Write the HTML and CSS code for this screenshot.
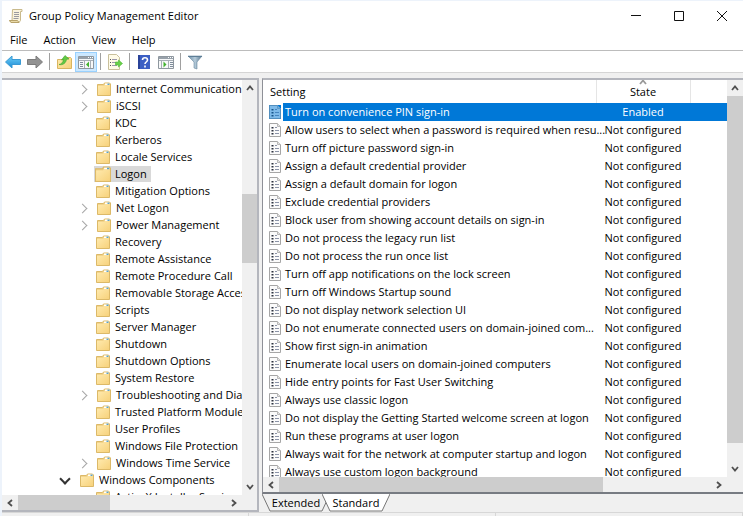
FILE: index.html
```
<!DOCTYPE html>
<html lang="en">
<head>
    <meta charset="UTF-8">
    <meta name="viewport" content="width=device-width, initial-scale=1.0">
    <title>Group Policy Management Editor</title>
    <link rel="stylesheet" href="styles.css">
</head>
<body>
    <!-- Shared icons -->
    <svg class="defs" aria-hidden="true">
        <linearGradient id="folderFill" x1="0" y1="0" x2="1" y2="1">
            <stop offset="0" stop-color="#ffeaae"/>
            <stop offset="1" stop-color="#f7d27c"/>
        </linearGradient>
        <linearGradient id="blueFill" x1="0" y1="0" x2="0" y2="1">
            <stop offset="0" stop-color="#6fd0f8"/>
            <stop offset="1" stop-color="#1a8ad6"/>
        </linearGradient>
        <linearGradient id="filterFill" x1="0" y1="0" x2="1" y2="0">
            <stop offset="0" stop-color="#6b8ea8"/>
            <stop offset=".5" stop-color="#b5cbda"/>
            <stop offset="1" stop-color="#54748c"/>
        </linearGradient>
        <symbol id="folder" viewBox="0 0 14 14">
            <path d="M.5 2.500h6l1-1.500h5l1 1v11.500H.5z" fill="#f2d48c" stroke="#dcb968"/>
            <path d="M8 1.500h4.500v1.500H8z" fill="#fff"/>
            <path d="M10.500 1.500h2v1.500h-2z" fill="#5ba3c9"/>
            <path d="M1 4h6l1-1h5v10H1z" fill="url(#folderFill)"/>
        </symbol>
        <symbol id="policy" viewBox="0 0 12 14">
            <path d="M.5.5h8l3 3v10H.5z" fill="#fbfbfb" stroke="#a6a6a6"/>
            <path d="M8.500.5v3h3" fill="#e4e4e4" stroke="#b8b8b8"/>
            <path d="M2.500 4h2v1.500h-2zM2.500 7h2v1.500h-2zM2.500 10h2v1.500h-2z" fill="#2d3340"/>
            <path d="M6 4.500h2M6 7.500h4M6 10.500h4" stroke="#8b93a8"/>
        </symbol>
        <symbol id="arrow" viewBox="0 0 8 8">
            <path d="M1 6l3-3.500L7 6" fill="none" stroke="currentColor" stroke-width="1.800"/>
        </symbol>
    </svg>

    <div class="window">
        <header class="titlebar">
            <svg class="app-icon" viewBox="0 0 14 14">
                <path d="M3.500.5h9.500v2h-1.500v9L10 13.500H2l-1.500-2H3z" fill="#faf3dc" stroke="#c9ba8c"/>
                <path d="M.5 11.500h8l1.500 2H2z" fill="#e9d9a8" stroke="#b7a26a"/>
                <path d="M5 3.500h5M5 5.500h5M5 7.500h5M4.500 9.500h5" stroke="#9a9aa0"/>
            </svg>
            <h1>Group Policy Management Editor</h1>
            <div class="window-buttons">
                <button type="button" aria-label="Minimize"><svg viewBox="0 0 10 10"><path d="M0 4.500h10"/></svg></button>
                <button type="button" aria-label="Maximize"><svg viewBox="0 0 10 10"><path d="M.5.5h9v9h-9z"/></svg></button>
                <button type="button" aria-label="Close"><svg viewBox="0 0 10 10"><path d="M0 0l10 10M10 0L0 10"/></svg></button>
            </div>
        </header>

        <nav class="menu">
            <button type="button">File</button>
            <button type="button">Action</button>
            <button type="button">View</button>
            <button type="button">Help</button>
        </nav>

        <div class="toolbar">
            <button type="button" aria-label="Back"><svg viewBox="0 0 16 16"><path d="M.5 8L7 2v3.500h8.500v5H7V14z" fill="url(#blueFill)" stroke="#3a9ad4"/></svg></button>
            <button type="button" aria-label="Forward"><svg viewBox="0 0 16 16"><path d="M15.500 8L9 2v3.500H.5v5H9V14z" fill="#929292" stroke="#7b7b7b"/></svg></button>
            <span class="separator"></span>
            <button type="button" aria-label="Up one level"><svg viewBox="0 0 16 16">
                <path d="M1.500 5.500h7l1-2h5l1 1v10h-14z" fill="url(#folderFill)" stroke="#d9b560"/>
                <path d="M3 10.500c2.500-.5 4-2 4.500-5l-2 .5 3.500-4.500 4 3.500-2.500.3C10 9 7 11.500 3 10.500z" fill="#62c944" stroke="#3da32a" stroke-width=".6"/>
            </svg></button>
            <button type="button" class="pressed" aria-label="Show or hide console tree"><svg viewBox="0 0 16 16">
                <path d="M.5 2.500h15v12H.5z" fill="#f7f8f9" stroke="#8e979f"/>
                <path d="M1 3h14v2H1z" fill="#98a1aa"/>
                <path d="M10 3.500h1M12 3.500h1M14 3.500h1" stroke="#fff"/>
                <path d="M1 6.500h14M6.500 7v7M12.500 7v7" stroke="#a8afb6"/>
                <path d="M2 8.500h3M2 10.500h3M2 12.500h3" stroke="#7f8d9b"/>
                <path d="M11 7.500v6L8 10.500z" fill="#42b22e"/>
            </svg></button>
            <span class="separator"></span>
            <button type="button" aria-label="Export list"><svg viewBox="0 0 16 16">
                <path d="M1.500.5h8l3 3v12h-11z" fill="#fffbe8" stroke="#c9c09c"/>
                <path d="M3 5.500h1M3 8.500h1M3 11.500h1" stroke="#555"/>
                <path d="M5 5.500h5M5 8.500h4M5 11.500h5" stroke="#9a96ac"/>
                <path d="M8.500 8h3V6l4 3.500-4 3.500v-2h-3z" fill="#6ad04a" stroke="#4ab834" stroke-width=".6"/>
            </svg></button>
            <span class="separator"></span>
            <button type="button" aria-label="Help"><svg viewBox="0 0 16 16">
                <path d="M2 1h12v14H2z" fill="#3b5fc4"/>
                <path d="M2 1h2v14H2z" fill="#2a4399"/>
                <path d="M6.500 6c0-3 5-3 5 0 0 2-2.500 2-2.500 4M9 11.500v2" fill="none" stroke="#fff" stroke-width="1.600"/>
            </svg></button>
            <button type="button" aria-label="Show or hide action pane"><svg viewBox="0 0 16 16">
                <path d="M.5 2.500h15v12H.5z" fill="#f7f8f9" stroke="#8e979f"/>
                <path d="M1 3h14v2H1z" fill="#98a1aa"/>
                <path d="M10 3.500h1M12 3.500h1M14 3.500h1" stroke="#fff"/>
                <path d="M1 6.500h14M3.500 7v7M10.500 7v7" stroke="#a8afb6"/>
                <path d="M12 8.500h3M12 10.500h3M12 12.500h3" stroke="#7f8d9b"/>
                <path d="M5.500 7.500v6l3-3z" fill="#42b22e"/>
            </svg></button>
            <span class="separator"></span>
            <button type="button" aria-label="Filter"><svg viewBox="0 0 16 16">
                <path d="M1 2h14l-5 6v7l-3-1V8z" fill="url(#filterFill)" stroke="#6d8ba1" stroke-width=".6"/>
                <path d="M1 2.500h14" stroke="#5d7e96"/>
            </svg></button>
        </div>

        <main class="panes">
            <section class="pane tree-pane">
                <ul class="tree">
                    <li class="parent"><svg><use href="#folder"/></svg><span>Internet Communication Management</span></li>
                    <li class="parent"><svg><use href="#folder"/></svg><span>iSCSI</span></li>
                    <li><svg><use href="#folder"/></svg><span>KDC</span></li>
                    <li><svg><use href="#folder"/></svg><span>Kerberos</span></li>
                    <li><svg><use href="#folder"/></svg><span>Locale Services</span></li>
                    <li class="current"><svg><use href="#folder"/></svg><span>Logon</span></li>
                    <li><svg><use href="#folder"/></svg><span>Mitigation Options</span></li>
                    <li class="parent"><svg><use href="#folder"/></svg><span>Net Logon</span></li>
                    <li class="parent"><svg><use href="#folder"/></svg><span>Power Management</span></li>
                    <li><svg><use href="#folder"/></svg><span>Recovery</span></li>
                    <li><svg><use href="#folder"/></svg><span>Remote Assistance</span></li>
                    <li><svg><use href="#folder"/></svg><span>Remote Procedure Call</span></li>
                    <li><svg><use href="#folder"/></svg><span>Removable Storage Access</span></li>
                    <li><svg><use href="#folder"/></svg><span>Scripts</span></li>
                    <li><svg><use href="#folder"/></svg><span>Server Manager</span></li>
                    <li><svg><use href="#folder"/></svg><span>Shutdown</span></li>
                    <li><svg><use href="#folder"/></svg><span>Shutdown Options</span></li>
                    <li><svg><use href="#folder"/></svg><span>System Restore</span></li>
                    <li class="parent"><svg><use href="#folder"/></svg><span>Troubleshooting and Diagnostics</span></li>
                    <li><svg><use href="#folder"/></svg><span>Trusted Platform Module Services</span></li>
                    <li><svg><use href="#folder"/></svg><span>User Profiles</span></li>
                    <li><svg><use href="#folder"/></svg><span>Windows File Protection</span></li>
                    <li class="parent"><svg><use href="#folder"/></svg><span>Windows Time Service</span></li>
                    <li class="parent open"><svg><use href="#folder"/></svg><span>Windows Components</span></li>
                    <li><svg><use href="#folder"/></svg><span>ActiveX Installer Service</span></li>
                </ul>
                <div class="scroll vertical">
                    <button type="button" aria-label="Scroll up"><svg><use href="#arrow"/></svg></button>
                    <div class="track"><div class="thumb"></div></div>
                    <button type="button" class="down" aria-label="Scroll down"><svg><use href="#arrow"/></svg></button>
                </div>
                <div class="scroll horizontal">
                    <button type="button" class="left" aria-label="Scroll left"><svg><use href="#arrow"/></svg></button>
                    <div class="track"><div class="thumb"></div></div>
                    <button type="button" class="right" aria-label="Scroll right"><svg><use href="#arrow"/></svg></button>
                </div>
            </section>

            <div class="details">
                <section class="pane list-pane">
                    <div class="list">
                        <table>
                            <thead>
                                <tr><th class="name">Setting</th><th class="state"><svg class="sort"><use href="#arrow"/></svg>State</th><th></th></tr>
                            </thead>
                            <tbody>
                                <tr class="selected"><td><svg><use href="#policy"/></svg><span>Turn on convenience PIN sign-in</span></td><td>Enabled</td><td></td></tr>
                                <tr><td><svg><use href="#policy"/></svg><span>Allow users to select when a password is required when resu...</span></td><td>Not configured</td><td></td></tr>
                                <tr><td><svg><use href="#policy"/></svg><span>Turn off picture password sign-in</span></td><td>Not configured</td><td></td></tr>
                                <tr><td><svg><use href="#policy"/></svg><span>Assign a default credential provider</span></td><td>Not configured</td><td></td></tr>
                                <tr><td><svg><use href="#policy"/></svg><span>Assign a default domain for logon</span></td><td>Not configured</td><td></td></tr>
                                <tr><td><svg><use href="#policy"/></svg><span>Exclude credential providers</span></td><td>Not configured</td><td></td></tr>
                                <tr><td><svg><use href="#policy"/></svg><span>Block user from showing account details on sign-in</span></td><td>Not configured</td><td></td></tr>
                                <tr><td><svg><use href="#policy"/></svg><span>Do not process the legacy run list</span></td><td>Not configured</td><td></td></tr>
                                <tr><td><svg><use href="#policy"/></svg><span>Do not process the run once list</span></td><td>Not configured</td><td></td></tr>
                                <tr><td><svg><use href="#policy"/></svg><span>Turn off app notifications on the lock screen</span></td><td>Not configured</td><td></td></tr>
                                <tr><td><svg><use href="#policy"/></svg><span>Turn off Windows Startup sound</span></td><td>Not configured</td><td></td></tr>
                                <tr><td><svg><use href="#policy"/></svg><span>Do not display network selection UI</span></td><td>Not configured</td><td></td></tr>
                                <tr><td><svg><use href="#policy"/></svg><span>Do not enumerate connected users on domain-joined com...</span></td><td>Not configured</td><td></td></tr>
                                <tr><td><svg><use href="#policy"/></svg><span>Show first sign-in animation</span></td><td>Not configured</td><td></td></tr>
                                <tr><td><svg><use href="#policy"/></svg><span>Enumerate local users on domain-joined computers</span></td><td>Not configured</td><td></td></tr>
                                <tr><td><svg><use href="#policy"/></svg><span>Hide entry points for Fast User Switching</span></td><td>Not configured</td><td></td></tr>
                                <tr><td><svg><use href="#policy"/></svg><span>Always use classic logon</span></td><td>Not configured</td><td></td></tr>
                                <tr><td><svg><use href="#policy"/></svg><span>Do not display the Getting Started welcome screen at logon</span></td><td>Not configured</td><td></td></tr>
                                <tr><td><svg><use href="#policy"/></svg><span>Run these programs at user logon</span></td><td>Not configured</td><td></td></tr>
                                <tr><td><svg><use href="#policy"/></svg><span>Always wait for the network at computer startup and logon</span></td><td>Not configured</td><td></td></tr>
                                <tr><td><svg><use href="#policy"/></svg><span>Always use custom logon background</span></td><td>Not configured</td><td></td></tr>
                            </tbody>
                        </table>
                    </div>
                    <div class="scroll vertical">
                        <button type="button" aria-label="Scroll up"><svg><use href="#arrow"/></svg></button>
                        <div class="track"><div class="thumb"></div></div>
                        <button type="button" class="down" aria-label="Scroll down"><svg><use href="#arrow"/></svg></button>
                    </div>
                    <div class="scroll horizontal">
                        <button type="button" class="left" aria-label="Scroll left"><svg><use href="#arrow"/></svg></button>
                        <div class="track"><div class="thumb"></div></div>
                        <button type="button" class="right" aria-label="Scroll right"><svg><use href="#arrow"/></svg></button>
                    </div>
                </section>
                <div class="tabs">
                    <button type="button"><svg viewBox="0 0 68 18" preserveAspectRatio="none"><path d="M0 0l8 17h52l8-17"/></svg><span>Extended</span></button>
                    <button type="button" class="active"><svg viewBox="0 0 68 18" preserveAspectRatio="none"><path d="M0 0l8 17h52l8-17"/></svg><span>Standard</span></button>
                </div>
            </div>
        </main>
        <footer class="status"><span></span><span></span><span></span></footer>
    </div>
</body>
</html>
```

FILE: styles.css
```
* {
    box-sizing: border-box;
}

body {
    margin: 0;
    background: #edf3fb;
    color: #000;
    font-family: "Open Sans", "Noto Sans", sans-serif;
    font-size: 11px;
    line-height: 16px;
}

button {
    padding: 0;
    border: none;
    background: none;
    color: inherit;
    font: inherit;
}

svg {
    display: block;
    flex: none;
}

.defs {
    position: absolute;
    width: 0;
    height: 0;
}

.window {
    display: flex;
    flex-direction: column;
    height: 100vh;
    padding: 1px 0 0 2px;
    overflow: hidden;
}

/* Title bar */
.titlebar {
    display: flex;
    align-items: center;
    height: 29px;
    padding-left: 7px;
    background: #fff;
}

.app-icon {
    width: 14px;
    height: 14px;
}

h1 {
    flex: 1;
    margin: 0 0 0 6px;
    font-size: 11px;
    font-weight: normal;
}

.window-buttons {
    display: flex;
}

.window-buttons button {
    display: flex;
    align-items: center;
    justify-content: center;
    width: 43px;
    height: 28px;
}

.window-buttons svg {
    width: 10px;
    height: 10px;
    fill: none;
    stroke: #111;
}

/* Menu and toolbar */
.menu {
    display: flex;
    gap: 16px;
    height: 20px;
    padding-left: 8px;
    background: #fff;
}

.toolbar {
    display: flex;
    align-items: center;
    height: 23px;
    border-top: 1px solid #bcbcbc;
    border-bottom: 1px solid #d5d5d5;
    background: #fff;
}

.toolbar button {
    display: flex;
    align-items: center;
    justify-content: center;
    width: 22px;
    height: 20px;
}

.toolbar svg {
    width: 16px;
    height: 16px;
}

.toolbar .pressed {
    border: 1px solid #99d1ff;
    background: #cce8ff;
}

.separator {
    width: 1px;
    height: 17px;
    margin: 0 3px;
    background: #a0a0a0;
}

/* Panes */
.panes {
    display: flex;
    flex: 1;
    gap: 3px;
    min-height: 0;
    padding-top: 5px;
    background: #f0f0f0;
}

.pane {
    display: grid;
    grid-template-columns: minmax(0, 1fr) 15px;
    grid-template-rows: minmax(0, 1fr) 15px;
    border: 2px solid #b4b6bd;
    border-left: none;
    background: #f0f0f0;
}

.tree-pane {
    width: 257px;
}

.tree {
    margin: 0;
    padding: 0;
    overflow: hidden;
    background: #fff;
    list-style: none;
}

.tree li {
    display: flex;
    align-items: center;
    height: 17px;
    padding-left: 92px;
    white-space: nowrap;
}

.tree li.open {
    padding-left: 74px;
}

.tree svg {
    width: 18px;
    height: 14px;
}

.tree span {
    padding: 0 4px 0 3px;
}

.tree .current svg,
.tree .current span {
    height: 16px;
    background: #d9d9d9;
}

.tree .parent::before {
    flex: none;
    width: 6px;
    height: 6px;
    margin: 2px 9px 0 -15px;
    border: solid #a6a6a6;
    border-width: 1px 1px 0 0;
    content: "";
    transform: rotate(45deg);
}

.tree .open::before {
    margin-top: -2px;
    border-color: #333;
    border-width: 2px 2px 0 0;
    transform: rotate(135deg);
}

.details {
    display: flex;
    flex: 1;
    flex-direction: column;
    min-width: 0;
}

.list-pane {
    flex: 1;
    min-height: 0;
    border-left: 1px solid #8e9097;
    border-right: none;
    border-bottom-color: #777b82;
}

.list-pane.pane {
    grid-template-columns: minmax(0, 1fr) 16px;
}

.list {
    overflow: hidden;
    background: #fff;
}

table {
    width: 100%;
    border-collapse: collapse;
    table-layout: fixed;
}

th {
    height: 23px;
    padding: 0;
    border-right: 1px solid #e5e5e5;
    font-weight: normal;
}

th:last-child {
    width: 37px;
    border-right: none;
}

.name {
    padding-left: 7px;
    text-align: left;
}

.state {
    position: relative;
    width: 94px;
}

.sort {
    position: absolute;
    top: 0;
    left: calc(50% - 4px);
    width: 8px;
    height: 8px;
    color: #999;
}

.sort use {
    transform: translateY(-2px);
}

td {
    height: 18px;
    padding: 0;
    text-align: center;
    white-space: nowrap;
}

td:first-child {
    display: flex;
    align-items: center;
    padding-left: 6px;
}

td svg {
    width: 12px;
    height: 14px;
}

td span {
    flex: 1;
    height: 18px;
    margin-left: 2px;
    padding-left: 2px;
    line-height: 18px;
    text-align: left;
}

.selected td:nth-child(n + 2),
.selected span {
    background: #0078d7;
    color: #fff;
}

.selected svg {
    background: #0078d7;
}

.selected use {
    opacity: 0.5;
}

/* Scroll bars */
.scroll {
    display: flex;
    background: #f0f0f0;
}

.vertical {
    flex-direction: column;
}

.scroll button {
    display: flex;
    align-items: center;
    justify-content: center;
    width: 16px;
    height: 16px;
    color: #505050;
}

.horizontal button {
    height: 15px;
}

.scroll button svg {
    width: 8px;
    height: 8px;
}

.down svg {
    transform: rotate(180deg);
}

.left svg {
    transform: rotate(-90deg);
}

.right svg {
    transform: rotate(90deg);
}

.track {
    display: flex;
    flex: 1;
}

.vertical .track {
    flex-direction: column;
}

.thumb {
    background: #cdcdcd;
}

.tree-pane .vertical .thumb {
    height: 18%;
    margin-top: 98px;
}

.tree-pane .horizontal .thumb {
    width: 44%;
}

.list-pane .vertical .thumb {
    height: 95%;
}

.list-pane .horizontal .thumb {
    width: 75%;
}

/* Tabs below the list */
.tabs {
    display: flex;
    height: 18px;
}

.tabs button {
    position: relative;
    width: 68px;
    height: 18px;
}

.tabs button + button {
    margin-left: -8px;
}

.tabs svg {
    position: absolute;
    inset: 0;
    width: 100%;
    height: 100%;
    fill: #f0f0f0;
    stroke: #777;
}

.tabs .active svg {
    fill: #fff;
}

.tabs span {
    position: relative;
}

.status {
    display: flex;
    height: 4px;
    border-top: 1px solid #d7d7d7;
    background: #f0f0f0;
}

.status span {
    flex: 1;
    border-right: 1px solid #d7d7d7;
}
```
